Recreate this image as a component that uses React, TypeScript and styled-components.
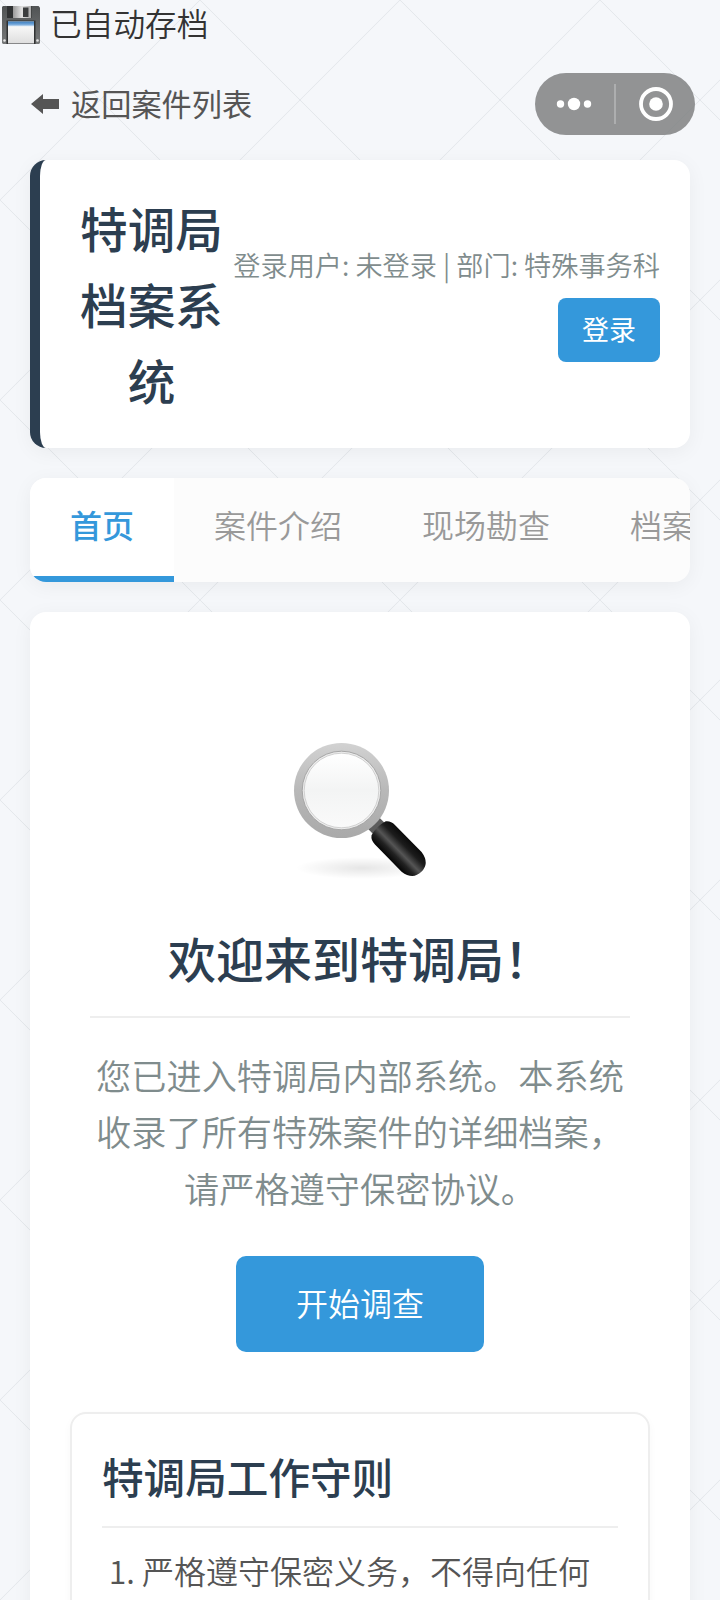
import React from "react";
import styled, { createGlobalStyle, css } from "styled-components";

const GlobalStyle = createGlobalStyle`
  * { box-sizing: border-box; }
  body {
    margin: 0;
    background: #f5f7fa;
    font-family: "Noto Sans CJK SC", "Noto Sans", sans-serif;
    font-weight: 350;
    color: #333;
  }
`;

const Page = styled.div`
  position: relative;
  width: 720px;
  height: 1600px;
  overflow: hidden;
  background-color: #f5f7fa;
  background-image:
    linear-gradient(45deg, transparent calc(50% - 0.8px), rgba(44, 62, 80, 0.08) 50%, transparent calc(50% + 0.8px)),
    linear-gradient(-45deg, transparent calc(50% - 0.8px), rgba(44, 62, 80, 0.08) 50%, transparent calc(50% + 0.8px));
  background-size: 200px 200px;
`;

const SaveNotice = styled.div`
  display: flex;
  align-items: center;
  height: 50px;
  padding-left: 2px;
  gap: 10px;
  font-size: 31.7px;
  line-height: 44px;

  span {
    padding-bottom: 6px;
  }
`;

const Container = styled.div`
  display: flex;
  flex-direction: column;
  padding: 0 30px;
`;

const BackLink = styled.a`
  display: flex;
  align-items: center;
  gap: 11px;
  height: 60px;
  margin: 24px 0 26px;
  padding-left: 1px;
  font-size: 30.2px;
  font-weight: 400;
  line-height: 44px;
  color: #555;

  span {
    padding-bottom: 2px;
  }
`;

const Card = styled.section`
  background: #fff;
  border-radius: 16px;
  box-shadow: 0 4px 20px rgba(0, 0, 0, 0.05);
`;

const Header = styled(Card)`
  display: flex;
  align-items: center;
  justify-content: space-between;
  height: 288px;
  padding: 0 30px 0 40px;
  border-left: 10px solid #2c3e50;
`;

const SiteTitle = styled.h1`
  width: 143px;
  margin: 0;
  font-size: 47.6px;
  font-weight: 500;
  line-height: 76px;
  text-align: center;
  color: #2c3e50;
`;

const UserPanel = styled.div`
  display: flex;
  flex-direction: column;
  align-items: flex-end;
  gap: 14px;
  padding-bottom: 2px;
  font-size: 27.2px;
  line-height: 40px;
  white-space: nowrap;
  color: #7f8c8d;
`;

const Button = styled.button<{ $large?: boolean }>`
  display: block;
  flex: none;
  border: 0;
  font-family: inherit;
  color: #fff;
  background: #3498db;
  ${({ $large }) =>
    $large
      ? css`
          width: 248px;
          height: 96px;
          padding: 0 0 4px;
          border-radius: 10px;
          font-size: 32px;
          font-weight: 350;
        `
      : css`
          width: 102px;
          height: 64px;
          padding: 0 0 4px;
          border-radius: 8px;
          font-size: 27px;
          font-weight: 400;
        `}
`;

const Tabs = styled.nav`
  display: flex;
  height: 104px;
  margin: 30px 0;
  overflow: hidden;
  border-radius: 16px;
  background: #fcfcfc;
  box-shadow: 0 4px 20px rgba(0, 0, 0, 0.05);
`;

const Tab = styled.div<{ $active?: boolean }>`
  flex: none;
  padding: 0 40px;
  border-bottom: 6px solid ${({ $active }) => ($active ? "#3498db" : "transparent")};
  background: ${({ $active }) => ($active ? "#fff" : "transparent")};
  color: ${({ $active }) => ($active ? "#3498db" : "#999")};
  font-size: 32px;
  font-weight: ${({ $active }) => ($active ? 500 : "inherit")};
  line-height: 92px;
`;

const Content = styled(Card)`
  height: 1060px;
  padding: 120px 40px 0;

  > svg,
  > button {
    display: block;
    margin: 0 auto;
  }
`;

const Welcome = styled.h2`
  width: 540px;
  height: 100px;
  margin: 26px auto 29px;
  padding-top: 16px;
  border-bottom: 2px solid #eee;
  font-size: 48px;
  font-weight: 500;
  line-height: 46px;
  text-align: center;
  color: #2c3e50;
`;

const Intro = styled.p`
  width: 540px;
  margin: 0 auto 40px;
  font-size: 35.2px;
  line-height: 56.3px;
  text-align: center;
  color: #7f8c8d;
`;

const Rules = styled.section`
  width: 580px;
  height: 400px;
  margin: 60px auto 0;
  padding: 30px 30px 0;
  border: 2px solid #eee;
  border-radius: 16px;
  box-shadow: 0 4px 10px rgba(0, 0, 0, 0.03);
`;

const RulesTitle = styled.h3`
  height: 84px;
  margin: 0 0 14px;
  border-bottom: 2px solid #eee;
  font-size: 41.6px;
  font-weight: 500;
  line-height: 64px;
  color: #2c3e50;
`;

const RuleList = styled.ol`
  margin: 0;
  padding-left: 40px;
  font-size: 32px;
  line-height: 56px;
  color: #555;
`;

const Capsule = styled.div`
  position: absolute;
  top: 73px;
  left: 535px;
  display: flex;
  width: 160px;
  height: 62px;
  border-radius: 31px;
  background: rgba(125, 126, 128, 0.83);
`;

const FloppyIcon = () => (
  <svg width="38" height="38" viewBox="0 0 38 38">
    <defs>
      <linearGradient id="shell" x1="0" y1="0" x2="0" y2="1">
        <stop offset="0" stopColor="#505354" />
        <stop offset="1" stopColor="#77797a" />
      </linearGradient>
      <linearGradient id="shutter">
        <stop offset="0" stopColor="#999" />
        <stop offset=".5" stopColor="#e2e2e2" />
        <stop offset="1" stopColor="#aaa" />
      </linearGradient>
      <linearGradient id="label" x1="0" y1="0" x2="0" y2="1">
        <stop offset="0" stopColor="#fff" />
        <stop offset="1" stopColor="#dedede" />
      </linearGradient>
      <linearGradient id="stripe" x1="0" y1="0" x2="0" y2="1">
        <stop offset="0" stopColor="#3f80c0" />
        <stop offset=".55" stopColor="#6da3d8" />
        <stop offset="1" stopColor="#dbe9f6" />
      </linearGradient>
    </defs>
    <path d="M1 0H36.5L38 1.5V37L37 38H1L0 37V1Z" fill="url(#shell)" />
    <rect x="5" y="0" width="24.5" height="12" fill="#303233" />
    <rect x="11" y="0" width="18" height="12" fill="url(#shutter)" />
    <rect x="21" y="1.5" width="5.5" height="9.5" fill="#3b3d3e" />
    <rect x="4.5" y="14.5" width="29" height="23.5" fill="#303233" />
    <rect x="6" y="15.5" width="26" height="22" fill="url(#label)" />
    <rect x="6" y="15.5" width="26" height="5" fill="url(#stripe)" />
    <circle cx="2.5" cy="34.5" r="1.3" fill="#e5e5e5" />
    <circle cx="35.5" cy="34.5" r="1.3" fill="#e5e5e5" />
  </svg>
);

const ArrowIcon = () => (
  <svg width="29" height="22" viewBox="0 0 29 22">
    <path d="M0 11 12 1V6H28V16H12V21Z" fill="#555" />
  </svg>
);

const MagnifierIcon = () => (
  <svg width="180" height="160" viewBox="0 0 180 160">
    <defs>
      <linearGradient id="rim" x1="0" y1="0" x2="0" y2="1">
        <stop offset="0" stopColor="#d2d2d2" />
        <stop offset=".5" stopColor="#b8b8b8" />
        <stop offset="1" stopColor="#a9a9a9" />
      </linearGradient>
      <linearGradient id="lens" x1="0" y1="0" x2="0" y2="1">
        <stop offset="0" stopColor="#fff" />
        <stop offset=".5" stopColor="#f3f4f4" />
        <stop offset="1" stopColor="#fafafa" />
      </linearGradient>
      <linearGradient id="handle" x1="0" y1="0" x2="0" y2="1">
        <stop offset="0" stopColor="#0a0a0a" />
        <stop offset=".28" stopColor="#1c1c1c" />
        <stop offset=".55" stopColor="#555" />
        <stop offset=".75" stopColor="#222" />
        <stop offset="1" stopColor="#050505" />
      </linearGradient>
      <radialGradient id="ground">
        <stop offset="0" stopColor="#000" stopOpacity=".1" />
        <stop offset="1" stopColor="#000" stopOpacity="0" />
      </radialGradient>
    </defs>
    <ellipse cx="92" cy="136" rx="66" ry="11" fill="url(#ground)" />
    <g transform="translate(71.5 58.5) rotate(45.5)">
      <rect x="44" y="-8" width="12" height="16" fill="#5c5c5c" />
      <path d="M53-10Q56-14 62-14H100Q114-12 114 0Q114 12 100 14H62Q56 14 53 10Q50 0 53-10Z" fill="url(#handle)" />
    </g>
    <circle cx="71.5" cy="58.5" r="47.5" fill="url(#rim)" />
    <circle cx="71.5" cy="58.5" r="39.3" fill="#ececec" stroke="#a6a6a6" strokeWidth="1" />
    <circle cx="71.5" cy="58.5" r="37.3" fill="url(#lens)" stroke="#c8c8c8" strokeWidth=".8" />
  </svg>
);

const CapsuleIcons = () => (
  <svg width="160" height="62" viewBox="0 0 160 62" fill="#fff">
    <circle cx="25.5" cy="31" r="3.7" />
    <circle cx="39" cy="31" r="6.2" />
    <circle cx="52.5" cy="31" r="3.7" />
    <rect x="79" y="11" width="2" height="40" opacity=".25" />
    <circle cx="121" cy="31" r="15" fill="none" stroke="#fff" strokeWidth="3.8" />
    <circle cx="121" cy="31" r="6.8" />
  </svg>
);

const tabs = ["首页", "案件介绍", "现场勘查", "档案"];

export default function App() {
  return (
    <>
      <GlobalStyle />
      <Page>
        <SaveNotice>
          <FloppyIcon />
          <span>已自动存档</span>
        </SaveNotice>
        <Container>
          <BackLink>
            <ArrowIcon />
            <span>返回案件列表</span>
          </BackLink>
          <Header>
            <SiteTitle>特调局档案系统</SiteTitle>
            <UserPanel>
              <span>登录用户: 未登录 | 部门: 特殊事务科</span>
              <Button>登录</Button>
            </UserPanel>
          </Header>
          <Tabs>
            {tabs.map((name, i) => (
              <Tab key={name} $active={i === 0}>
                {name}
              </Tab>
            ))}
          </Tabs>
          <Content>
            <MagnifierIcon />
            <Welcome>欢迎来到特调局！</Welcome>
            <Intro>您已进入特调局内部系统。本系统收录了所有特殊案件的详细档案，请严格遵守保密协议。</Intro>
            <Button $large>开始调查</Button>
            <Rules>
              <RulesTitle>特调局工作守则</RulesTitle>
              <RuleList>
                <li>严格遵守保密义务，不得向任何</li>
              </RuleList>
            </Rules>
          </Content>
        </Container>
        <Capsule>
          <CapsuleIcons />
        </Capsule>
      </Page>
    </>
  );
}
